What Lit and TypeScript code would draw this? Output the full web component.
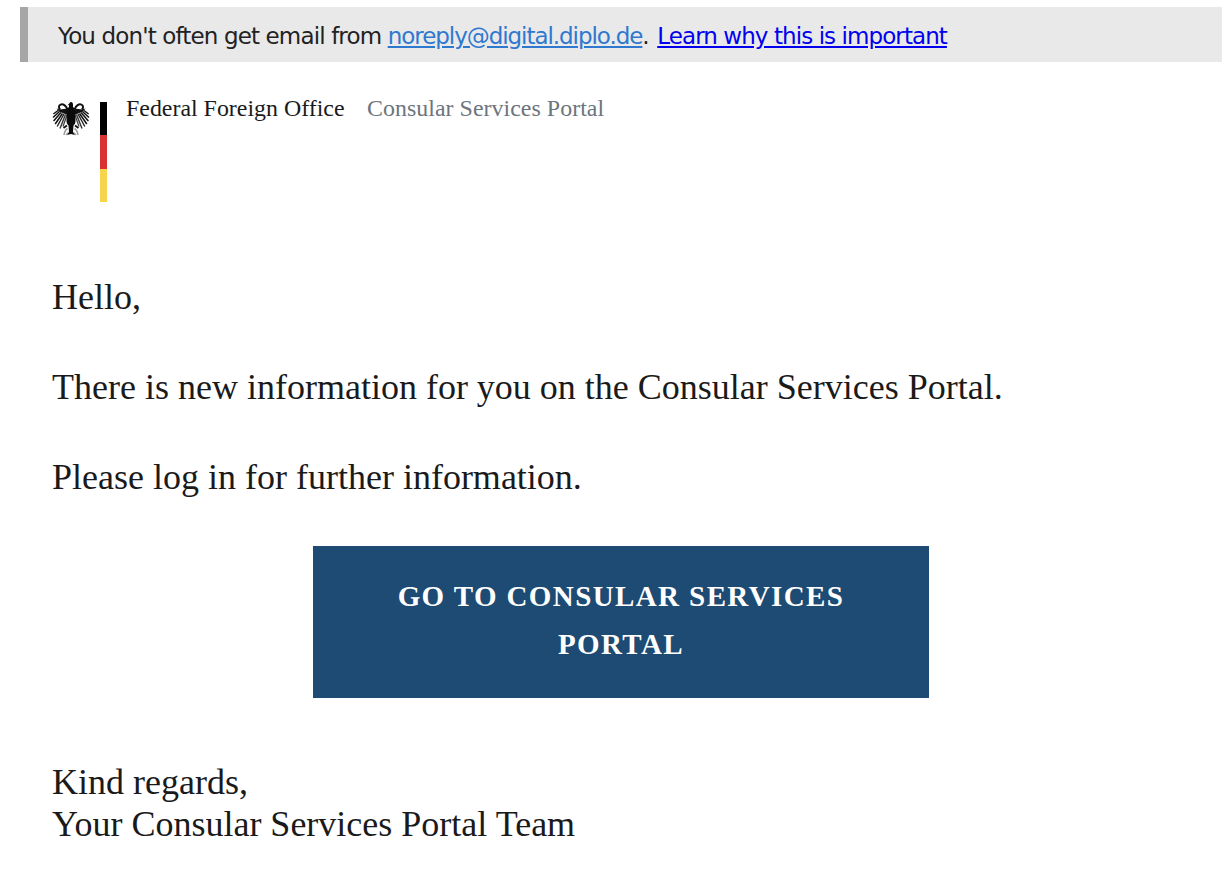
import { LitElement, html, css, svg } from "lit";
import { customElement } from "lit/decorators.js";

const wing = svg`
  <path fill="none" stroke="#111" stroke-width="2" d="M15.5 10.5C14 6.5 11 4.6 8.6 5.6C6.4 6.6 6.4 9.4 8.4 10.2"/>
  <path fill="#111" d="M15.5 9.5L15.5 16L7 12.5L4.5 9.5L8 10.5Z"/>
  <path fill="none" stroke="#111" stroke-width="1.5" d="M6 11.5L1.4 15"/>
  <path fill="none" stroke="#111" stroke-width="1.5" d="M7.5 12.5L1 18.5"/>
  <path fill="none" stroke="#111" stroke-width="1.5" d="M9 13.5L1.6 22"/>
  <path fill="none" stroke="#111" stroke-width="1.5" d="M10.5 14.5L3.2 25"/>
  <path fill="none" stroke="#222" stroke-width="1.4" d="M12 15L5.2 27.5"/>
  <path fill="none" stroke="#333" stroke-width="1.4" d="M13.5 15.5L8 29.5"/>
  <path fill="none" stroke="#444" stroke-width="1.3" d="M15 16L11 27.5"/>
  <path fill="none" stroke="#999" stroke-width="1.5" d="M15.5 29.5C13.5 30.5 12.5 33 12 36"/>
  <path fill="none" stroke="#aaa" stroke-width="1.3" d="M14 36L16 33.5"/>
`;

@customElement("app-root")
export class AppRoot extends LitElement {
  static styles = css`
    :host { display: block; width: 1228px; height: 874px; background: #fff; overflow: hidden; font-family: "Liberation Serif", serif; color: #1a1a1a; }
    .banner { margin: 7px 6px 0 20px; height: 55px; box-sizing: border-box; background: #e9e9e9; border-left: 8px solid #a6a6a6; padding: 2px 0 0 30px; display: flex; align-items: center; font-family: "DejaVu Sans", sans-serif; font-size: 23px; letter-spacing: -0.86px; color: #222; }
    .banner a { text-decoration: underline; }
    .l1 { color: #2f78d0; letter-spacing: -1.05px; }
    .l2 { color: #0000ee; letter-spacing: -0.92px; margin-left: 2px; }
    .head { display: flex; margin: 40px 0 0 52px; height: 100px; }
    .eagle { width: 38px; height: 38px; margin: -3px 10px 0 0; }
    .flag { width: 7px; height: 100px; background: linear-gradient(#000 0 33.3%, #d93232 33.3% 66.6%, #f6d44c 66.6%); margin-right: 19px; }
    .names { font-size: 23.9px; line-height: 12px; display: flex; gap: 22.5px; }
    .muted { color: #6c757d; letter-spacing: 0.04px; }
    .body { margin: 0 0 0 52px; font-size: 36px; }
    .body p { margin: 0; line-height: 42px; }
    .p1 { padding-top: 74px; }
    .p2, .p3 { padding-top: 48px; }
    .btn { margin: 48px 0 0 261px; width: 616px; height: 152px; box-sizing: border-box; padding: 26px 60px 0; background: #1d4b73; color: #fff; font-weight: 700; font-size: 29px; letter-spacing: 1.4px; line-height: 48px; text-align: center; }
    .sign { padding-top: 63px; }
  `;
  render() {
    return html`
      <div class="banner"><span>You don't often get email from <a class="l1">noreply@digital.diplo.de</a>. <a class="l2">Learn why this is important</a></span></div>
      <div class="head">
        <svg class="eagle" viewBox="0 0 38 38" aria-hidden="true">
          <g>${wing}</g>
          <g transform="matrix(-1 0 0 1 38 0)">${wing}</g>
          <path fill="#0a0a0a" d="M18 3.5C19.5 2.5 21 3.5 21 5.5L21 8C22.5 9 23 10.5 23 12L23.5 22C23.5 24 22.5 25.5 21.5 26.5L21 33L23 36L19 35L15 36L17 33L16.5 26.5C15.5 25.5 14.5 24 14.5 22L15 12C15 10.5 15.5 9 17 8L17 6L15.5 6.5Z"/>
          <path fill="none" stroke="#111" stroke-width="1.8" d="M15 26.5L11.5 29M23 26.5L26.5 29"/>
        </svg>
        <div class="flag"></div>
        <div class="names"><span>Federal Foreign Office</span><span class="muted">Consular Services Portal</span></div>
      </div>
      <div class="body">
        <p class="p1">Hello,</p>
        <p class="p2">There is new information for you on the Consular Services Portal.</p>
        <p class="p3">Please log in for further information.</p>
        <div class="btn">GO TO CONSULAR SERVICES PORTAL</div>
        <p class="sign">Kind regards,<br />Your Consular Services Portal Team</p>
      </div>
    `;
  }
}
